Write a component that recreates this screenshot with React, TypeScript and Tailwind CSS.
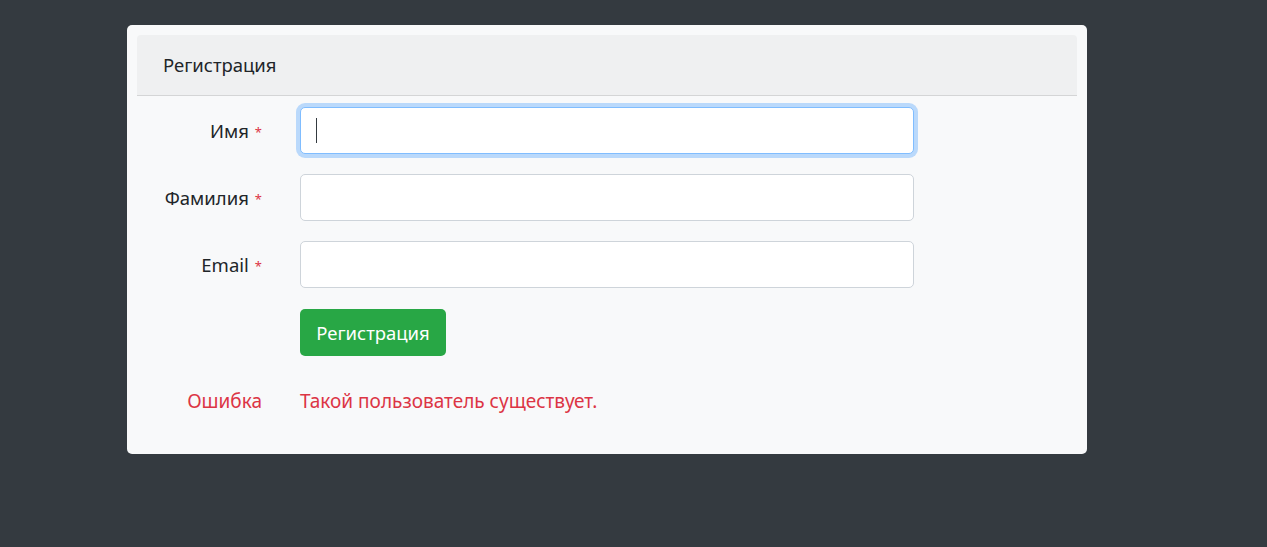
import React from 'react';

const fields = [
  { label: 'Имя', focused: true },
  { label: 'Фамилия', focused: false },
  { label: 'Email', focused: false },
];

export default function App() {
  return (
    <div
      className="min-h-screen bg-[#343a40] pt-[25px] pl-[127px] text-[18.5px] text-[#212529]"
      style={{ fontFamily: '"Noto Sans", "Open Sans", sans-serif' }}
    >
      <div className="w-[960px] h-[429px] bg-[#f8f9fa] rounded-[5px] p-[10px]">
        <div className="h-[61px] bg-[#eff0f1] border-b border-[#d4d5d6] rounded-t-[4px] flex items-center px-[26px]">
          Регистрация
        </div>

        <div className="pt-[11px] flex flex-col gap-[20px]">
          {fields.map((f) => (
            <div key={f.label} className="flex items-center h-[47px]">
              <label className="w-[126px] text-right pr-[1px]">
                {f.label}
                <span className="text-[#dc3545] text-[13px] ml-[6px] relative -top-[1px]">*</span>
              </label>
              <div className="ml-[37px] relative">
                <input
                  className={
                    'w-[614px] h-[47px] rounded-[5px] bg-white border outline-none ' +
                    (f.focused
                      ? 'border-[#80bdff] shadow-[0_0_0_4px_rgba(0,123,255,0.25)]'
                      : 'border-[#ced4da]')
                  }
                />
                {f.focused && (
                  <span className="absolute left-[16px] top-[11px] w-px h-[25px] bg-[#343a40]" />
                )}
              </div>
            </div>
          ))}

          <div className="flex items-center h-[47px] mt-[1px]">
            <div className="w-[126px]" />
            <button className="ml-[37px] w-[146px] h-[47px] rounded-[5px] bg-[#28a745] text-white">
              Регистрация
            </button>
          </div>

          <div className="flex items-center h-[30px] mt-[10px] text-[#dc3545] text-[19px]">
            <div className="w-[126px] text-right pr-[1px]">Ошибка</div>
            <div className="ml-[37px]">Такой пользователь существует.</div>
          </div>
        </div>
      </div>
    </div>
  );
}
